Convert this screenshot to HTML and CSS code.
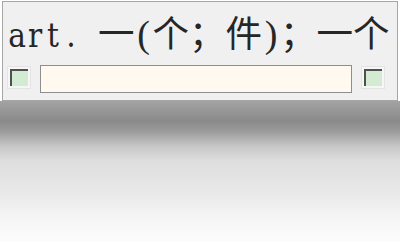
FILE: index.html
```html
<!DOCTYPE html>
<html lang="zh">
<head>
<meta charset="utf-8">
<link rel="stylesheet" href="styles.css">
</head>
<body>
<div class="panel">
  <div class="line"><span class="m">a</span><span class="m">r</span><span class="m">t</span><span class="m">.</span><span class="m">&nbsp;</span><span class="cjk">一</span><span class="m paren">(</span><span class="cjk">个；件</span><span class="m paren">)</span><span class="cjk">；一个</span></div>
  <div class="row">
    <span class="chk"><span class="fill"></span></span>
    <span class="field"></span>
    <span class="chk"><span class="fill"></span></span>
  </div>
</div>
<div class="shade"></div>
</body>
</html>
```
FILE: styles.css
```css
html, body {
  margin: 0;
  padding: 0;
  background: #ffffff;
  overflow: hidden;
}
body {
  width: 400px;
  height: 242px;
}
.panel {
  margin: 1px 2px 0 2px;
  height: 98px;
  border: 1px solid #a6a6a6;
  background: #f0f0f0;
  overflow: hidden;
}
.line {
  height: 63px;
  padding-left: 5px;
  white-space: nowrap;
  color: #262626;
  line-height: 60px;
  font-size: 36px;
}
.m {
  display: inline-block;
  width: 18px;
  text-align: center;
  font-family: "DejaVu Serif Condensed", "DejaVu Serif", serif;
  font-stretch: condensed;
  font-size: 33px;
}
.paren {
  font-family: "Liberation Serif", serif;
  font-size: 38px;
  font-weight: 300;
}
.cjk {
  font-family: "Noto Sans CJK SC", sans-serif;
  font-size: 36.5px;
  font-weight: 400;
}
.row {
  display: flex;
  align-items: flex-start;
  gap: 9px;
  padding-left: 4px;
}
.chk {
  display: flex;
  width: 24px;
  height: 23px;
  padding: 2px;
  box-sizing: border-box;
  margin-top: 1px;
  background: #f6f6f6;
  border: 1px solid #e4e4e4;
}
.fill {
  flex: 1;
  border-top: 2px solid #505050;
  border-left: 2px solid #505050;
  background: #d2ebd2;
}
.field {
  width: 312px;
  height: 28px;
  box-sizing: border-box;
  border: 1px solid #8e8e8e;
  background: #fff9ef;
}
.shade {
  height: 142px;
  background: linear-gradient(to bottom, #a3a3a3 0px, #8a8a8a 20px, #9a9a9a 30px, #c6c6c6 45px, #dedede 60px, #e8e8e8 90px, #f4f4f4 115px, #fdfdfd 142px);
}
```
